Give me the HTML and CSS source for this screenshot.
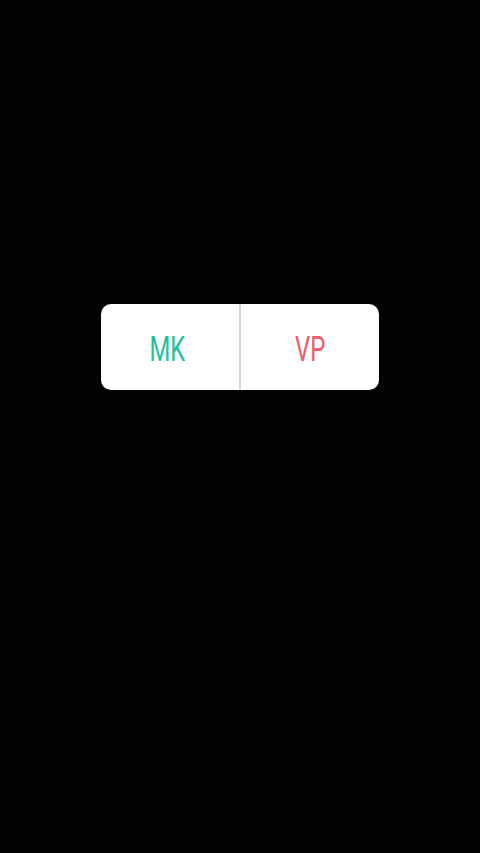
FILE: index.html
```html
<!DOCTYPE html>
<html>
<head>
<meta charset="utf-8">
<link rel="stylesheet" href="styles.css">
</head>
<body>
<div class="screen">
  <div class="choice">
    <div class="option"><span class="label mk">MK</span></div>
    <div class="divider"></div>
    <div class="option"><span class="label vp">VP</span></div>
  </div>
</div>
</body>
</html>
```
FILE: styles.css
```css
html, body {
  margin: 0;
  padding: 0;
  background: #030304;
  height: 100%;
}
.screen {
  height: 853px;
  padding-top: 304px;
  box-sizing: border-box;
  display: flex;
  justify-content: center;
  align-items: flex-start;
}
.choice {
  width: 278px;
  height: 86px;
  background: #fff;
  border-radius: 10px;
  display: flex;
  align-items: stretch;
  overflow: hidden;
}
.option {
  flex: 1;
  display: flex;
  align-items: center;
  justify-content: center;
}
.divider {
  width: 2px;
  background: #d6d6d6;
}
.label {
  display: inline-block;
  font-family: Roboto, "Liberation Sans", sans-serif;
  font-weight: 400;
  font-size: 35px;
  line-height: 1;
  transform: scaleX(0.68);
  padding-top: 4px;
}
.mk {
  color: #26bf9c;
  margin-right: 6px;
}
.vp {
  color: #ec5c6c;
  margin-left: 0;
}
```
